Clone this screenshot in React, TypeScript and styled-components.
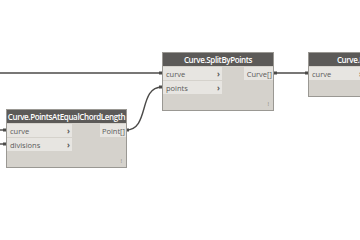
import React from "react";
import styled, { createGlobalStyle } from "styled-components";

const GlobalStyle = createGlobalStyle`
  html, body {
    margin: 0;
    padding: 0;
    background: #ffffff;
  }
  body {
    font-family: "Open Sans", "Noto Sans", sans-serif;
  }
`;

const Canvas = styled.div`
  position: relative;
  width: 360px;
  height: 240px;
  overflow: hidden;
  background: #ffffff;
`;

const Wires = styled.svg`
  position: absolute;
  left: 0;
  top: 0;
  width: 360px;
  height: 240px;
`;

const NodeBox = styled.div<{ $x: number; $y: number; $w: number }>`
  position: absolute;
  left: ${(p) => p.$x}px;
  top: ${(p) => p.$y}px;
  width: ${(p) => p.$w}px;
  display: flex;
  flex-direction: column;
  background: #d5d2cc;
  border: 1px solid #9a9893;
  box-sizing: border-box;
`;

const Header = styled.div`
  height: 13px;
  background: #5c5a58;
  color: #ffffff;
  font-size: 8px;
  font-weight: 600;
  letter-spacing: -0.38px;
  line-height: 13px;
  text-align: center;
  white-space: nowrap;
  overflow: hidden;
`;

const Body = styled.div`
  display: flex;
  justify-content: space-between;
  align-items: flex-start;
`;

const Column = styled.div`
  display: flex;
  flex-direction: column;
`;

const InPort = styled.div<{ $w: number }>`
  width: ${(p) => p.$w}px;
  height: 14px;
  box-sizing: border-box;
  display: flex;
  align-items: center;
  justify-content: space-between;
  padding: 0 2px 0 3px;
  background: #e7e5e1;
  border-top: 1px solid #d5d2cc;
  font-size: 7.5px;
  color: #5a5a5a;
`;

const Chevron = styled.span`
  font-size: 8px;
  font-weight: 700;
  color: #555;
`;

const OutPort = styled.div<{ $w: number }>`
  width: ${(p) => p.$w}px;
  height: 14px;
  box-sizing: border-box;
  display: flex;
  align-items: center;
  justify-content: flex-end;
  padding-right: 1px;
  background: #e7e5e1;
  border-top: 1px solid #d5d2cc;
  font-size: 7.5px;
  color: #5a5a5a;
`;

const Footer = styled.div`
  height: 14px;
  display: flex;
  justify-content: flex-end;
  align-items: flex-end;
  padding: 0 4px 2px 0;
  font-size: 6px;
  color: #8a8883;
`;

type NodeProps = {
  x: number;
  y: number;
  w: number;
  title: string;
  inputs: string[];
  inW: number;
  outputs: string[];
  outW: number;
  grip?: boolean;
};

const Node = ({ x, y, w, title, inputs, inW, outputs, outW, grip = true }: NodeProps) => (
  <NodeBox $x={x} $y={y} $w={w}>
    <Header>{title}</Header>
    <Body>
      <Column>
        {inputs.map((name) => (
          <InPort key={name} $w={inW}>
            <span>{name}</span>
            <Chevron>›</Chevron>
          </InPort>
        ))}
      </Column>
      <Column>
        {outputs.map((name) => (
          <OutPort key={name} $w={outW}>
            {name}
          </OutPort>
        ))}
      </Column>
    </Body>
    <Footer>{grip ? "⁞" : ""}</Footer>
  </NodeBox>
);

const WIRE = "#4b4a48";

export default function App() {
  return (
    <>
      <GlobalStyle />
      <Canvas>
        <Wires viewBox="0 0 360 240">
          <g stroke={WIRE} strokeWidth={1.4} fill="none">
            <path d="M0 73 L162 73" />
            <path d="M274 73 L308 73" />
            <path d="M126 130 C150 130 138 87 162 87" />
            <path d="M0 130 L6 130" />
            <path d="M0 144 L6 144" />
          </g>
          <g fill={WIRE}>
            <rect x={159} y={71.5} width={3} height={3} />
            <rect x={159} y={85.5} width={3} height={3} />
            <rect x={305} y={71.5} width={3} height={3} />
            <rect x={274} y={71.5} width={3} height={3} />
            <rect x={126} y={128.5} width={3} height={3} />
            <rect x={3} y={128.5} width={3} height={3} />
            <rect x={3} y={142.5} width={3} height={3} />
          </g>
        </Wires>
        <Node
          x={162}
          y={52}
          w={112}
          title="Curve.SplitByPoints"
          inputs={["curve", "points"]}
          inW={59}
          outputs={["Curve[]"]}
          outW={29}
        />
        <Node
          x={6}
          y={109}
          w={121}
          title="Curve.PointsAtEqualChordLength"
          inputs={["curve", "divisions"]}
          inW={65}
          outputs={["Point[]"]}
          outW={26}
        />
        <Node
          x={308}
          y={52}
          w={112}
          title="Curve.EndPoint"
          inputs={["curve"]}
          inW={55}
          outputs={[]}
          outW={0}
          grip={false}
        />
      </Canvas>
    </>
  );
}
